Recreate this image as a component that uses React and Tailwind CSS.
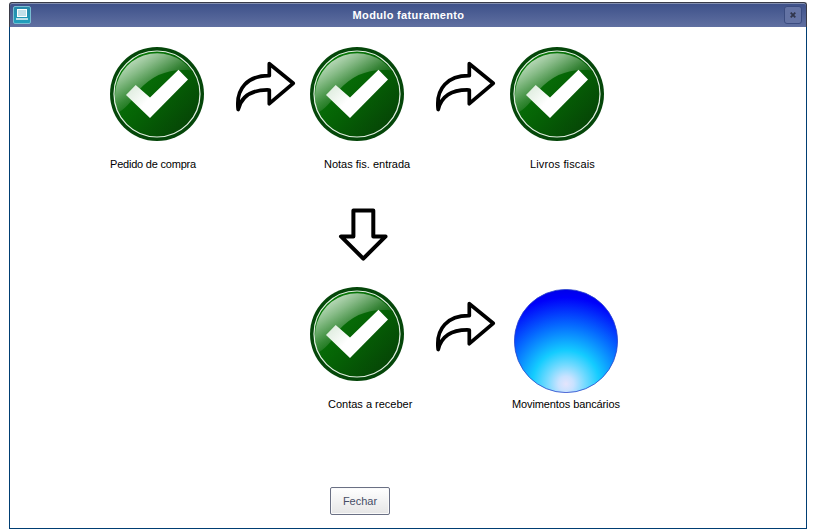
function CheckIcon({ id }) {
  return (
    <svg width="94" height="94" viewBox="0 0 94 94" className="block shrink-0">
      <defs>
        <linearGradient id={id + "b"} x1="0.1" y1="0.2" x2="0.85" y2="0.9">
          <stop offset="0" stopColor="#087a08" />
          <stop offset="0.5" stopColor="#056205" />
          <stop offset="1" stopColor="#064506" />
        </linearGradient>
        <linearGradient id={id + "g"} gradientUnits="userSpaceOnUse" x1="17" y1="13" x2="44" y2="56">
          <stop offset="0" stopColor="#fff" stopOpacity="0.76" />
          <stop offset="0.3" stopColor="#fff" stopOpacity="0.52" />
          <stop offset="0.65" stopColor="#fff" stopOpacity="0.2" />
          <stop offset="0.85" stopColor="#fff" stopOpacity="0.07" />
          <stop offset="1" stopColor="#fff" stopOpacity="0" />
        </linearGradient>
        <linearGradient id={id + "c"} gradientUnits="userSpaceOnUse" x1="18" y1="40" x2="36" y2="56">
          <stop offset="0" stopColor="#dcebdc" />
          <stop offset="1" stopColor="#fff" />
        </linearGradient>
      </defs>
      <circle cx="47" cy="47" r="47" fill="#05470a" />
      <circle cx="47" cy="47" r="43" fill={`url(#${id}b)`} stroke="#e3f0e3" strokeWidth="1.2" />
      <path d="M5 50A42.4 42.4 0 0 1 81.5 23.5C60 21 42 28 29 43C24 50 18 60 9 65C6 61 5 56 5 50Z" fill={`url(#${id}g)`} />
      <path d="M16 48L25.7 38L40 50.5L68.5 22.7L78 32.5L40 71Z" fill={`url(#${id}c)`} />
    </svg>
  );
}

function CurvedArrow() {
  return (
    <svg width="62" height="54" viewBox="0 0 62 54" className="mt-[13px] ml-[31px] block shrink-0">
      <path
        d="M34.3 3.7L58.2 23.3L34.3 43.7V30C19 29.5 7 34 3.2 49.5C0.5 28 13 15.5 34.3 15.7Z"
        fill="#fff" stroke="#000" strokeWidth="3.7" strokeLinejoin="round"
      />
    </svg>
  );
}

function DownArrow() {
  return (
    <svg width="50" height="56" viewBox="0 0 50 56" className="block">
      <path d="M15.4 4.4H35.3V30.4H47.6L25.3 52.6L3 30.4H15.4Z" fill="#fff" stroke="#000" strokeWidth="4" strokeLinejoin="round" />
    </svg>
  );
}

function BlueSphere() {
  return (
    <svg width="104" height="104" viewBox="0 0 104 104" className="mt-[2px] block shrink-0">
      <defs>
        <radialGradient id="sphere" gradientUnits="userSpaceOnUse" cx="52" cy="95" r="96">
          <stop offset="0" stopColor="#e4e4fc" />
          <stop offset="0.08" stopColor="#c8e2ff" />
          <stop offset="0.2" stopColor="#74daff" />
          <stop offset="0.35" stopColor="#14ccff" />
          <stop offset="0.62" stopColor="#0568ff" />
          <stop offset="0.9" stopColor="#0000fa" />
          <stop offset="1" stopColor="#0000e6" />
        </radialGradient>
      </defs>
      <circle cx="52" cy="52" r="51.6" fill="url(#sphere)" stroke="#2945ca" strokeWidth="0.8" />
    </svg>
  );
}

function TitleIcon() {
  return (
    <svg width="18" height="18" viewBox="0 0 18 18" className="block">
      <defs>
        <linearGradient id="app" x1="0" y1="0" x2="0" y2="1">
          <stop offset="0" stopColor="#2787a8" />
          <stop offset="1" stopColor="#20a0bd" />
        </linearGradient>
      </defs>
      <rect x="0.5" y="0.5" width="17" height="17" rx="1.5" fill="url(#app)" stroke="#78bdd2" />
      <rect x="4.5" y="3.5" width="9" height="7" fill="#c3dfe8" stroke="#fff" />
      <path d="M3 13H15" stroke="#e2f1f5" strokeWidth="1.6" />
    </svg>
  );
}

export default function App() {
  return (
    <div className="h-[532px] w-[813px] overflow-hidden bg-white pt-[2px] pl-[9px] font-['Liberation_Sans',Arial,sans-serif] text-[11px] leading-[14px] text-black">
      <div className="flex h-[527px] w-[798px] flex-col">
        <header className="flex h-[25px] shrink-0 items-center justify-between rounded-t-[3px] border-x border-t border-[#393b48] bg-linear-to-b from-[#3d5089] to-[#6070a1] pr-[4px] pl-[3px] shadow-[inset_0_1px_0_#8490b0]">
          <TitleIcon />
          <h1 className="ml-[2px] text-[11px] font-bold tracking-[0.34px] text-white">Modulo faturamento</h1>
          <button aria-label="Fechar janela" className="flex size-[18px] items-center justify-center rounded-[3px] border border-[#3b4c80] bg-[#6473a4]">
            <svg width="6" height="6" viewBox="0 0 6 6">
              <path d="M0.7 0.7L5.3 5.3M5.3 0.7L0.7 5.3" stroke="#30354b" strokeWidth="1.8" />
            </svg>
          </button>
        </header>
        <main className="flex flex-1 flex-col border-x border-b border-[#003e73]">
          <div className="mt-[20px] ml-[100px] flex h-[94px]">
            <CheckIcon id="order" />
            <div className="w-[106px]"><CurvedArrow /></div>
            <CheckIcon id="notes" />
            <div className="w-[106px]"><CurvedArrow /></div>
            <CheckIcon id="books" />
          </div>
          <div className="mt-[16px] ml-[100px] flex h-[14px] whitespace-nowrap">
            <span className="w-[214px] tracking-[-0.21px]">Pedido de compra</span>
            <span className="w-[206px]">Notas fis. entrada</span>
            <span className="tracking-[0.14px]">Livros fiscais</span>
          </div>
          <div className="mt-[35px] ml-[328px] h-[56px]"><DownArrow /></div>
          <div className="mt-[25px] ml-[300px] flex h-[110px]">
            <CheckIcon id="accounts" />
            <div className="w-[110px] shrink-0"><CurvedArrow /></div>
            <BlueSphere />
          </div>
          <div className="ml-[318px] flex h-[14px] whitespace-nowrap">
            <span className="w-[184px]">Contas a receber</span>
            <span className="tracking-[-0.11px]">Movimentos bancários</span>
          </div>
          <button className="mt-[76px] ml-[320px] flex h-[28px] w-[60px] items-center justify-center rounded-[2px] border border-[#6a7084] bg-linear-to-b from-white to-[#e6e6e6] text-[11px] text-[#464d66] shadow-[inset_0_0_0_1px_#fafafa]">
            Fechar
          </button>
        </main>
      </div>
    </div>
  );
}
